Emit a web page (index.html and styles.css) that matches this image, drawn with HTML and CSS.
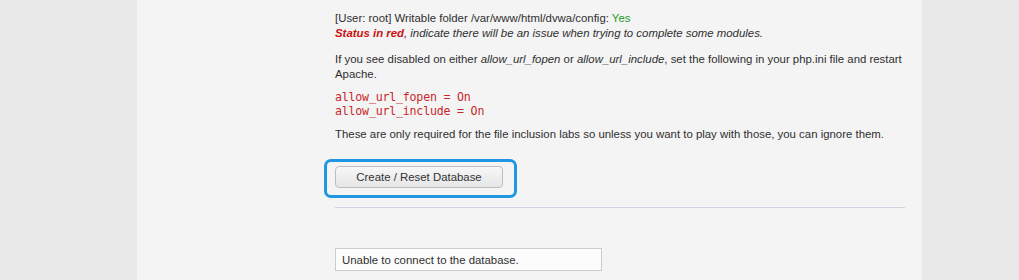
FILE: index.html
```html
<!DOCTYPE html>
<html>
<head>
    <title>Database Setup</title>
    <link rel="stylesheet" href="styles.css">
</head>
<body>
    <div class="container">
        <div class="body-padded">
            <p class="status">
                [User: root] Writable folder /var/www/html/dvwa/config: <span class="success">Yes</span><br>
                <em><span class="failure">Status in red</span>, indicate there will be an issue when trying to complete some modules.</em>
            </p>

            <p class="note">If you see disabled on either <em>allow_url_fopen</em> or <em>allow_url_include</em>, set the following in your php.ini file and restart Apache.</p>

            <pre class="code">allow_url_fopen = On
allow_url_include = On</pre>

            <p>These are only required for the file inclusion labs so unless you want to play with those, you can ignore them.</p>

            <form class="setup-form">
                <div class="highlight">
                    <input type="button" class="btn" value="Create / Reset Database">
                </div>
            </form>

            <hr class="divider">

            <div class="message">Unable to connect to the database.</div>
        </div>
    </div>
</body>
</html>
```

FILE: styles.css
```css
body {
    margin: 0;
    background-color: #e8e8e8;
    font-family: 'Liberation Sans', Arial, sans-serif;
    font-size: 11.4px;
    color: #2f2f2f;
    line-height: 15px;
}
.container {
    margin-left: 137px;
    width: 785px;
    height: 280px;
    background-color: #f4f4f4;
    overflow: hidden;
}
.body-padded {
    padding: 11px 0 0 198px;
    width: 570px;
}
p {
    margin: 0 0 11px 0;
}
.note {
    margin-bottom: 8px;
}
.success {
    color: #2a9a2a;
}
.failure {
    color: #cc1111;
    font-weight: bold;
}
.code {
    font-family: 'DejaVu Sans Mono', 'Liberation Mono', monospace;
    font-size: 11.6px;
    letter-spacing: -0.2px;
    line-height: 14px;
    color: #c8262a;
    margin: 0 0 9px 0;
}
.setup-form {
    margin: 17px 0 0 0;
}
.highlight {
    display: inline-block;
    margin-left: -11px;
    padding: 4px 11px 7px 8px;
    border: 3px solid #1f97e3;
    border-radius: 7px;
}
.btn {
    display: block;
    width: 168px;
    height: 22px;
    margin: 0;
    padding: 0;
    font-family: 'Liberation Sans', Arial, sans-serif;
    font-size: 11.4px;
    color: #333;
    background: linear-gradient(#f7f7f7, #e6e6e6);
    border: 1px solid #bdbdbd;
    border-radius: 4px;
}
.divider {
    margin: 9px 0 0 0;
    border: 0;
    border-top: 1px solid #cfd6e2;
    height: 0;
}
.message {
    margin-top: 40px;
    width: 259px;
    height: 21px;
    padding: 0 0 0 6px;
    line-height: 23px;
    background-color: #fcfcfc;
    border: 1px solid #cccccc;
}
```
